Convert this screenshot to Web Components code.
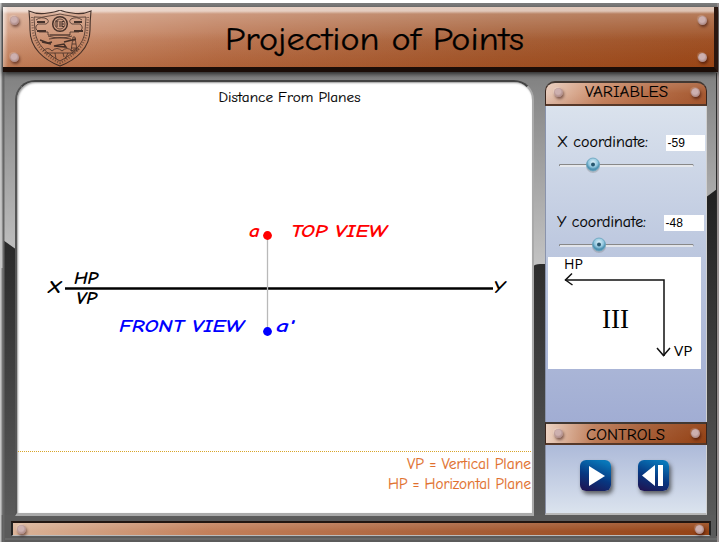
<!DOCTYPE html>
<html lang="en"><head><meta charset="utf-8"><title>Projection of Points</title>
<style>
body{margin:0;background:#fff;width:722px;height:542px;overflow:hidden;font-family:"Comic Sans MS","Comic Neue","Open Sans",sans-serif;color:#000}
</style></head><body>
<lab-frame>
<lab-header slot="header"></lab-header>
<projection-stage slot="stage"></projection-stage>
<side-panel slot="side">
<panel-title slot="variables" label="VARIABLES" len="83" x="40" base="14"></panel-title>
<range-field slot="fields" label="X coordinate:" len="91" value="-59" knob="34" style="--gap:40px;--bx:119px;--bw:39px"></range-field>
<range-field slot="fields" label="Y coordinate:" len="89" value="-48" knob="40" style="--bx:117px;--bw:40px"></range-field>
<quadrant-card slot="fields"></quadrant-card>
<panel-title slot="controls" class="b" label="CONTROLS" len="79" x="41" base="15.5"></panel-title>
<control-button slot="buttons" kind="play"></control-button>
<control-button slot="buttons" kind="back"></control-button>
</side-panel>
<rivet-dot slot="footer"></rivet-dot><rivet-dot slot="footer"></rivet-dot>
</lab-frame>
<script>
const define=(name,html)=>customElements.define(name,class extends HTMLElement{
 constructor(){super();this.attachShadow({mode:'open'})}
 connectedCallback(){const t=document.createElement('template');t.innerHTML=typeof html==='function'?html(this):html;this.shadowRoot.replaceChildren(t.content.cloneNode(true))}
});

define('rivet-dot',`<style>:host{display:block;width:9px;height:9px;border-radius:50%;background:radial-gradient(circle at 45% 40%,#cdb0af 0 35%,#b99896 55%,#8f706d 100%);box-shadow:1px 2px 3px #2008,-1px -1px 1px #fff3}</style>`);

define('lab-crest',`<style>:host{display:block;width:64px;height:58px}svg{display:block}</style>
<svg width="64" height="58" viewBox="0 0 64 58" fill="none" stroke="#33231e" stroke-width=".8" opacity=".88">
<path d="M1 1Q10 5 20 3Q28 2 32 0Q36 2 44 3Q54 5 63 1Q62 11 62 20C62 38 48 50 32 56C16 50 2 38 2 20Q2 11 1 1Z" stroke-width="1.1"/>
<path d="M6 7Q14 8 21 6Q28 5 32 4Q36 5 43 6Q50 8 58 7L57 21C56 34 45 44 32 51C19 44 8 34 7 21Z"/>
<path d="M4 7L5 22C7 35 18 46 32 53C46 46 57 35 59 22L60 7" stroke-width="2.2" stroke-dasharray="1 1.6" opacity=".6"/>
<circle cx="32" cy="14" r="7.3" stroke-width="1.5"/><circle cx="32" cy="14" r="5"/>
<path d="M29 11v6M27.500 11h3M32 11v6M36 11.500h-2v5h2M34 14h2" stroke-width="1.100"/>
<path d="M8 10q5-4 11-1q3 3-1 5h-8q-5 4 1 8h9V25h22v-3h9q6-4 1-8h-8q-4-2-1-5q6-3 11 1"/>
<path d="M9 12h8M9 21h9M46 12h8M46 21h9" stroke-width="1.8"/>
<path d="M20 26q12 4 24 0M21 29q11-3 22 0M22 25h20" />
<path d="M12 30l8 3 4-1M14 32l9 2M26 36l10-2 2 3zM36 32l4-1 8-2" stroke-width="1.5"/>
<path d="M45 27l-2 14h6l-2-14zM44 34h4M43 38h5M45 31l2-1"/>
<path d="M15 41q5-5 9 0q5-5 10 0q5-5 10 0q4-4 7-1M17 43h30M22 44l3 3M27 43l1 6M35 43l1 4M40 43l-3 6"/>
</svg>`);

define('lab-header',`<style>:host{display:block;box-sizing:border-box;height:65px;border-bottom:5px solid #1b0d07;border-right:4px solid #2b1710;background:linear-gradient(90deg,#fff9 0,#fff0 5px),linear-gradient(#fff8 0 4px,#fff0 7px),linear-gradient(180deg,#fff5 0,#fff1 55%,#fff0 100%),linear-gradient(90deg,#cf9576 0,#b9724d 30%,#a1572d 70%,#994719 100%);box-shadow:0 2px 5px #222;position:relative}
:host::after{content:"";position:absolute;inset:25px 0 0;background:linear-gradient(#9a421000,#9a421055);z-index:0}
.row{display:grid;grid-template-columns:18px 94px 1fr 22px;position:relative;z-index:1;height:60px}
.r{display:flex;flex-direction:column;gap:28px;padding:9px 0 0 6px}.l{padding-left:7px}
lab-crest{margin:3px 0 0 7px}svg{display:block}text{stroke:#000;stroke-width:.25px}</style>
<div class="row"><div class="r l"><rivet-dot></rivet-dot><rivet-dot></rivet-dot></div><lab-crest></lab-crest>
<svg width="430" height="60"><text x="110" y="42.500" font-size="33" textLength="299" lengthAdjust="spacingAndGlyphs">Projection of Points</text></svg>
<div class="r"><rivet-dot></rivet-dot><rivet-dot></rivet-dot></div></div>`);

define('lab-frame',`<style>:host{display:block;position:relative;width:719px;height:539px;margin-top:3px;overflow:hidden;background:#808080}
.bg{position:absolute;inset:0}.all{position:relative;display:grid;grid-template-rows:65px 433px 15px;padding:4px 1px 0 3px;height:535px;row-gap:0}
.mid{display:grid;grid-template-columns:519px 162px;gap:11px;padding-left:12px;margin-top:8px;height:435px}
.foot{display:flex;align-items:center;justify-content:space-between;box-sizing:border-box;margin:16px 7px 0 8px;height:15px;padding:0 5px 0 4px;border:1px solid #bbb;border-top:2px solid #221611;border-left:2px solid #222;border-right:2px solid #222;background:linear-gradient(#fff2,#0000 70%),linear-gradient(90deg,#dbb499,#c3805b 28%,#a75e37 65%,#954214)}
</style><svg class="bg" width="719" height="539">
<defs><linearGradient id="lt" x1="0" y1="0" x2="0" y2="1"><stop stop-color="#7c7c7c"/><stop offset=".3" stop-color="#848484"/><stop offset="1" stop-color="#c4c4c4"/></linearGradient><linearGradient id="dk" x1="0" y1="0" x2="0" y2="1"><stop stop-color="#202020"/><stop offset="1" stop-color="#5b5b5b"/></linearGradient></defs>
<rect width="719" height="265" fill="url(#lt)"/><path d="M3 237L17 247H532V264Q535 261 540 261H546V230H705V195L717 186V520H3Z" fill="url(#dk)"/><path d="M0 512H719V539H0Z" fill="#5b5b5b"/>
<path d="M0 0V539" stroke="#c6c6c6" stroke-width="3"/><path d="M3.500 8V539" stroke="#666" stroke-width="2"/><path d="M716.500 70V533" stroke="#292929" stroke-width="1" fill="none"/><path d="M718 0V539" stroke="#979191" stroke-width="2"/><path d="M5 536H717" stroke="#777"/>
</svg><div class="all"><slot name="header"></slot><div class="mid"><slot name="stage"></slot><slot name="side"></slot></div><div class="foot"><slot name="footer"></slot></div></div>`);

define('projection-stage',`<style>:host{display:block;box-sizing:border-box;width:519px;height:436px;background:#fff;border:1px solid #555;border-top:2px solid #444;border-bottom:3px solid #aaa;border-left:2px solid #555;border-right:2px solid #aaa;border-radius:20px 20px 0 0;box-shadow:inset 1px 1px 2px #999;overflow:hidden}svg{display:block;margin:-2px 0 0 -2px}
.ink{font-style:italic;font-weight:600}.plain{stroke-width:.15px}</style>
<svg width="519" height="435" viewBox="15 80 519 435">
<text class="plain" stroke="#000" x="218.500" y="102" font-size="14.500" textLength="142" lengthAdjust="spacingAndGlyphs">Distance From Planes</text>
<path d="M65 288.500H493" stroke="#000" stroke-width="2.700"/><path d="M267.500 235V331" stroke="#b9b9b9" stroke-width="1.300"/>
<g class="ink" font-size="18.500">
<text x="48" y="292.500" textLength="13" lengthAdjust="spacingAndGlyphs">X</text><text x="74" y="283.500" font-size="17.500" textLength="24" lengthAdjust="spacingAndGlyphs">HP</text><text x="76" y="303.500" font-size="17.500" textLength="21" lengthAdjust="spacingAndGlyphs">VP</text><text x="493" y="292.500" textLength="12" lengthAdjust="spacingAndGlyphs">Y</text>
<g fill="red"><circle cx="267.500" cy="235.500" r="4.400"/><text x="249" y="237" textLength="11" lengthAdjust="spacingAndGlyphs" style="font-weight:700">a</text><text x="291" y="237" textLength="96" lengthAdjust="spacingAndGlyphs" style="font-weight:700">TOP VIEW</text></g>
<g fill="#00f"><circle cx="267.500" cy="331.500" r="4.400"/><text x="276" y="332" textLength="18" lengthAdjust="spacingAndGlyphs" style="font-weight:700">a'</text><text x="119" y="331.500" textLength="125" lengthAdjust="spacingAndGlyphs" style="font-weight:700">FRONT VIEW</text></g></g>
<path d="M18 451.500H532" stroke="#d9a52a" stroke-dasharray="1 1"/>
<g class="plain" fill="#e1702d" stroke="#e1702d" font-size="15"><text x="407" y="468.500" textLength="124" lengthAdjust="spacingAndGlyphs">VP = Vertical Plane</text><text x="388" y="488.500" textLength="143" lengthAdjust="spacingAndGlyphs">HP = Horizontal Plane</text></g></svg>`);

define('panel-title',e=>`<style>:host{display:flex;align-items:center;justify-content:space-between;box-sizing:border-box;height:25px;padding:0 6px 2px 8px;border:1px solid #38241c;border-top:2px solid #423832;border-bottom:2px solid #563829;background:linear-gradient(#fff2,#0000 50%,#8b320e22),linear-gradient(90deg,#e7c9b8,#c98966 35%,#b56e48 65%,#a65a32);border-radius:10px 10px 0 0}
:host(.b){border-radius:0;height:23px;padding:1px 6px 1px 8px;background:linear-gradient(#fff1,#0000),linear-gradient(90deg,#ecd0bf,#bd7b57 30%,#a45b34 60%,#934013)}svg{display:block}text{stroke:#000;stroke-width:.1px}</style><rivet-dot></rivet-dot><svg width="116" height="20"><text x="${e.getAttribute('x')-24}" y="${e.getAttribute('base')}" font-size="15.500" textLength="${e.getAttribute('len')}" lengthAdjust="spacingAndGlyphs">${e.getAttribute('label')}</text></svg><rivet-dot></rivet-dot>`);

define('side-panel',`<style>:host{display:grid;grid-template-rows:25px 316px 23px 70px;width:162px;height:434px;margin-top:1px}
.v{box-sizing:border-box;padding:29px 0 0 1px;background:linear-gradient(#dae2ed,#bdc8df 45%,#a1add3);border-left:1px solid #8993ac;border-right:1px solid #d0d0d0}
.c{box-sizing:border-box;background:linear-gradient(#adbad9,#dbe3ee);border:1px solid #888fa5;border-right-color:#d2d2d2;border-bottom:2px solid #b8b8b8;border-top:0;display:flex;gap:26px;padding:15px 0 0 34px}</style><slot name="variables"></slot><div class="v"><slot name="fields"></slot></div><slot name="controls"></slot><div class="c"><slot name="buttons"></slot></div>`);

define('range-field',e=>`<style>:host{display:grid;grid-template-columns:var(--bx) var(--bw);grid-template-rows:16px 24px;height:40px;margin-bottom:var(--gap,2px)}
svg{display:block;overflow:visible}.box{background:#fff;font:12px/16px "Liberation Sans",sans-serif;padding-left:1.500px;box-sizing:border-box}.track{grid-column:1/3}text{stroke:#000;stroke-width:.15px}</style>
<svg width="115" height="18"><text x="10" y="12" font-size="15.500" textLength="${e.getAttribute('len')}" lengthAdjust="spacingAndGlyphs">${e.getAttribute('label')}</text></svg><div class="box">${e.getAttribute('value')}</div>
<svg class="track" width="157" height="24"><defs><radialGradient id="g" cy=".35"><stop stop-color="#e2f4fc"/><stop offset=".7" stop-color="#91c6de"/><stop offset="1" stop-color="#4e92b2"/></radialGradient></defs><path d="M12.500 15v-1.500H146V15" fill="none" stroke="#888"/><path d="M13 15H146" stroke="#eee" stroke-width="1.500"/><circle cx="${+e.getAttribute('knob')+12}" cy="15" r="7" fill="#777" opacity=".3"/><circle cx="${+e.getAttribute('knob')+12}" cy="13.500" r="6.500" fill="url(#g)" stroke="#6aa4be" stroke-width=".8"/><circle cx="${+e.getAttribute('knob')+12}" cy="13.500" r="2" fill="#26566e"/></svg>`);

define('quadrant-card',`<style>:host{display:block;width:153px;height:112px;margin:0 0 0 1px;background:#fff;position:relative}svg{display:block;overflow:visible}</style>
<svg width="153" height="112" viewBox="548 257 153 112"><g fill="none" stroke="#111" stroke-width="1.500"><path d="M565 280H664V356"/><path d="M572 273.500L565.500 280L572.500 285M657 348L663.500 355.500L670 348"/></g><g font-family="Open Sans" font-size="14"><text x="564" y="269" textLength="19" lengthAdjust="spacingAndGlyphs">HP</text><text x="674" y="356" textLength="18.500" lengthAdjust="spacingAndGlyphs">VP</text></g><text x="602" y="327.500" font-family="Liberation Serif" font-size="27" textLength="27">III</text></svg>`);

define('control-button',e=>`<style>:host{display:block;width:31px;height:31px;margin-right:1px;border-radius:6px;background:linear-gradient(20deg,#22104d 0,#073781 45%,#0877b9 90%);box-shadow:2px 3px 4px #333b}svg{display:block}</style><svg width="31" height="31" fill="#fff">${e.getAttribute('kind')==='play'?'<path d="M9 6L25 16L9 26Z"/>':'<path d="M17 5V26L4 15.500ZM20 5h5v21h-5z"/>'}</svg>`);
</script></body></html>
